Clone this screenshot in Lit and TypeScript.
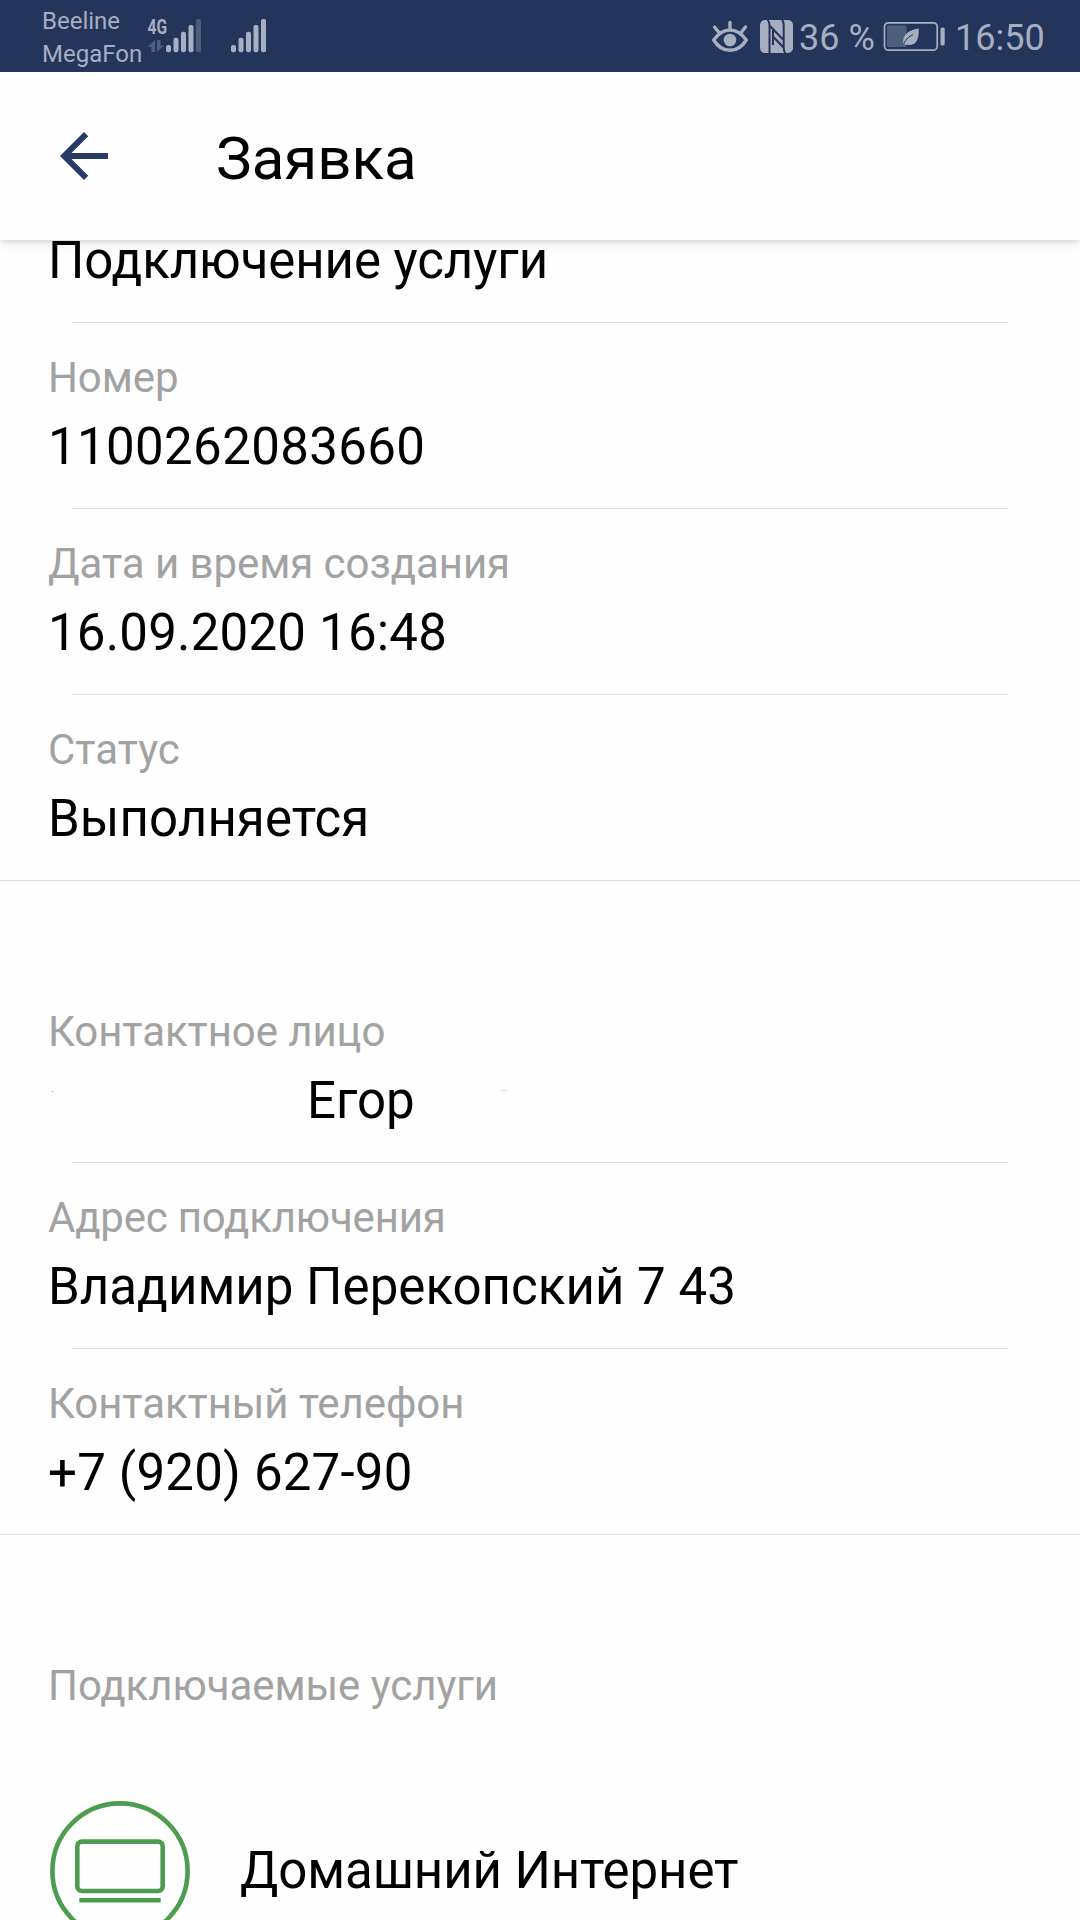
import { LitElement, html, svg, css, nothing } from "lit";
import { customElement, property } from "lit/decorators.js";
import { styleMap } from "lit/directives/style-map.js";

@customElement("status-bar")
class StatusBar extends LitElement {
  static styles = css`
    :host { display: block; }
    .bar { display: flex; align-items: flex-start; height: 72px; background: #24355b; color: #a7aec0; }
    .carriers { margin-left: 42px; width: 104px; padding-top: 5px; font-size: 24px; line-height: 33px; white-space: nowrap; }
    .signal { display: block; width: 130px; height: 72px; }
    .spacer { flex: 1; }
    .icons { display: block; width: 87px; height: 72px; }
    .battery { display: block; width: 72px; height: 72px; }
    .percent { width: 84px; font-size: 36px; line-height: 42px; padding-top: 17px; white-space: nowrap; }
    .time { width: 125px; font-size: 36px; line-height: 42px; padding-top: 17px; white-space: nowrap; }
    .g { font: 700 21px Roboto, sans-serif; }
  `;
  private bars(x: number, level: number) {
    const tops = [45, 37.7, 31.7, 25, 19];
    return tops.map((t, i) => svg`<rect x=${x + i * 7.5} y=${t} width="5" height=${52.3 - t} rx="2" fill=${i < level ? "#a7aec0" : "#505e7e"}></rect>`);
  }
  render() {
    return html`<div class="bar">
      <div class="carriers"><div>Beeline</div><div>MegaFon</div></div>
      <svg class="signal" viewBox="146 0 130 72">
        <text class="g" x="147.500" y="34" textLength="19.500" lengthAdjust="spacingAndGlyphs" fill="#a7aec0">4G</text>
        <path d="M155 40V52H151.500V47H147.500ZM157 40H160.500V45.500H164L157 52Z" fill="#505e7e"></path>
        ${this.bars(166, 4)}${this.bars(231, 5)}
      </svg>
      <div class="spacer"></div>
      <svg class="icons" viewBox="712 0 87 72">
        <g fill="none" stroke="#a7aec0" stroke-width="3.4" stroke-linecap="round">
          <path d="M713.7 40Q721 30 730 30T746.3 40Q740 50.3 730 50.3T713.7 40Z" stroke-linejoin="round"></path>
          <path d="M730 22.500V29M714.500 27L718.500 32M745.500 27L741.500 32"></path>
        </g>
        <circle cx="730" cy="40" r="6.300" fill="#a7aec0"></circle>
        <rect x="760" y="20" width="33" height="33" rx="5" fill="#a7aec0"></rect>
        <path fill="none" stroke="#24355b" stroke-width="2" d="M767.500 19.500Q769.500 22 769.500 25V53.500M782 19.500Q783.700 22 783.700 25V48Q783.700 51 785.500 53.500M770 26L783 39.500M773 36.500L783.500 47.500M773 30V45"></path>
      </svg>
      <div class="percent">36 %</div>
      <svg class="battery" viewBox="883 0 72 72">
        <rect x="884.500" y="22.800" width="52.700" height="27.400" rx="4" fill="none" stroke="#a7aec0" stroke-width="1.700"></rect>
        <rect x="887" y="25.500" width="19.500" height="21.500" rx="1.500" fill="#505e7e"></rect>
        <path d="M918.700 28.500Q919.500 45 909 45L904.500 44.500L903 44Q902 31 918.700 28.500Z" fill="#a7aec0"></path>
        <path d="M903.500 44Q907 37 913 34.500" stroke="#24355b" stroke-width="1" fill="none"></path>
        <rect x="940.500" y="27.500" width="4.200" height="18" rx="1.500" fill="#a7aec0"></rect>
      </svg>
      <div class="time">16:50</div>
    </div>`;
  }
}

@customElement("info-row")
class InfoRow extends LitElement {
  @property() label = "";
  @property() value = "";
  @property() kind = "";
  @property({ type: Number }) labelTracking = 0;
  @property({ type: Number }) valueTracking = 0;
  static styles = css`
    :host { display: block; }
    .row { display: flex; flex-direction: column; box-sizing: border-box; height: 185px; padding: 30px 48px 0; }
    .clipped { height: 82px; padding: 0 48px 31px; justify-content: flex-end; }
    .label { font-size: 42px; line-height: 50px; color: #a2a2a2; white-space: nowrap; }
    .value { font-size: 51px; line-height: 60px; margin-top: 14px; color: #000; white-space: nowrap; }
    .clipped .value { margin-top: 0; }
    .person { display: flex; align-items: flex-start; }
    .speck { width: 1px; height: 1px; margin: 20px 254px 0 4px; background: #999; }
    .dash { width: 6px; height: 1px; margin: 19px 0 0 86px; background: #d8d8d8; }
    .line { height: 1px; margin: 0 72px; background: #dcdcdc; }
    .full { margin: 0; }
  `;
  render() {
    const labelStyle = styleMap({ letterSpacing: `${this.labelTracking}px` });
    const valueStyle = styleMap({ letterSpacing: `${this.valueTracking}px` });
    const value = this.kind.includes("person")
      ? html`<div class="value person"><i class="speck"></i><span>${this.value}</span><i class="dash"></i></div>`
      : html`<div class="value" style=${valueStyle}>${this.value}</div>`;
    return html`<div class="row ${this.kind.includes("clipped") ? "clipped" : ""}">
        ${this.label ? html`<div class="label" style=${labelStyle}>${this.label}</div>` : nothing}
        ${value}
      </div>
      <div class="line ${this.kind.includes("last") ? "full" : ""}"></div>`;
  }
}

interface Field {
  label: string;
  value: string;
  kind: string;
  lt: number;
  vt: number;
}

@customElement("app-root")
class AppRoot extends LitElement {
  static styles = css`
    :host { display: block; height: 1920px; overflow: hidden; background: #fefefe; font-family: Roboto, sans-serif; color: #000; }
    .screen { display: flex; flex-direction: column; height: 1920px; overflow: hidden; }
    .header { position: relative; z-index: 1; display: flex; align-items: center; box-sizing: border-box; flex: none; height: 168px; padding: 0 48px; background: #fefefe; box-shadow: 0 2px 4px rgba(0,0,0,.1), 0 3px 12px rgba(0,0,0,.09); clip-path: inset(0 0 -20px 0); }
    .back { display: block; width: 72px; height: 72px; fill: #263a63; }
    .title { margin: 5px 0 0 96px; font-size: 60px; font-weight: 400; line-height: 70px; }
    .section { flex: none; margin-bottom: 96px; }
    .caption { flex: none; padding: 30px 48px 0; font-size: 42px; line-height: 50px; color: #a2a2a2; letter-spacing: -0.06px; }
    .service { display: flex; flex: none; align-items: center; height: 140px; margin-top: 90px; padding-left: 50px; }
    .icon { display: block; width: 140px; height: 140px; fill: none; stroke: #4d9c50; stroke-width: 4.600; }
    .name { margin: 0 0 0 50px; font-size: 51px; line-height: 60px; letter-spacing: -0.08px; }
  `;
  private request: Field[] = [
    { label: "", value: "Подключение услуги", kind: "clipped", lt: 0, vt: -0.08 },
    { label: "Номер", value: "1100262083660", kind: "", lt: -0.1, vt: 0.36 },
    { label: "Дата и время создания", value: "16.09.2020 16:48", kind: "", lt: -0.06, vt: 0.2 },
    { label: "Статус", value: "Выполняется", kind: "last", lt: 0, vt: 0.08 },
  ];
  private contact: Field[] = [
    { label: "Контактное лицо", value: "Егор", kind: "person", lt: -0.08, vt: 0 },
    { label: "Адрес подключения", value: "Владимир Перекопский 7 43", kind: "", lt: -0.2, vt: 0.04 },
    { label: "Контактный телефон", value: "+7 (920) 627-90", kind: "last", lt: -0.08, vt: 0.2 },
  ];
  private rows(list: Field[]) {
    return html`<div class="section">${list.map((r) => html`<info-row .label=${r.label} .value=${r.value} .kind=${r.kind} .labelTracking=${r.lt} .valueTracking=${r.vt}></info-row>`)}</div>`;
  }
  render() {
    return html`<div class="screen">
      <status-bar></status-bar>
      <div class="header">
        <svg class="back" viewBox="0 0 24 24"><path d="M20 11H7.830l5.590-5.590L12 4l-8 8 8 8 1.410-1.410L7.830 13H20v-2z"></path></svg>
        <div class="title">Заявка</div>
      </div>
      ${this.rows(this.request)}
      ${this.rows(this.contact)}
      <div class="caption">Подключаемые услуги</div>
      <div class="service">
        <svg class="icon" viewBox="0 0 140 140">
          <circle cx="70" cy="70" r="67.600"></circle>
          <rect x="27.300" y="40.600" width="85.400" height="49.400" rx="4.500"></rect>
          <path d="M29.300 99.200H110.700"></path>
        </svg>
        <div class="name">Домашний Интернет</div>
      </div>
    </div>`;
  }
}
